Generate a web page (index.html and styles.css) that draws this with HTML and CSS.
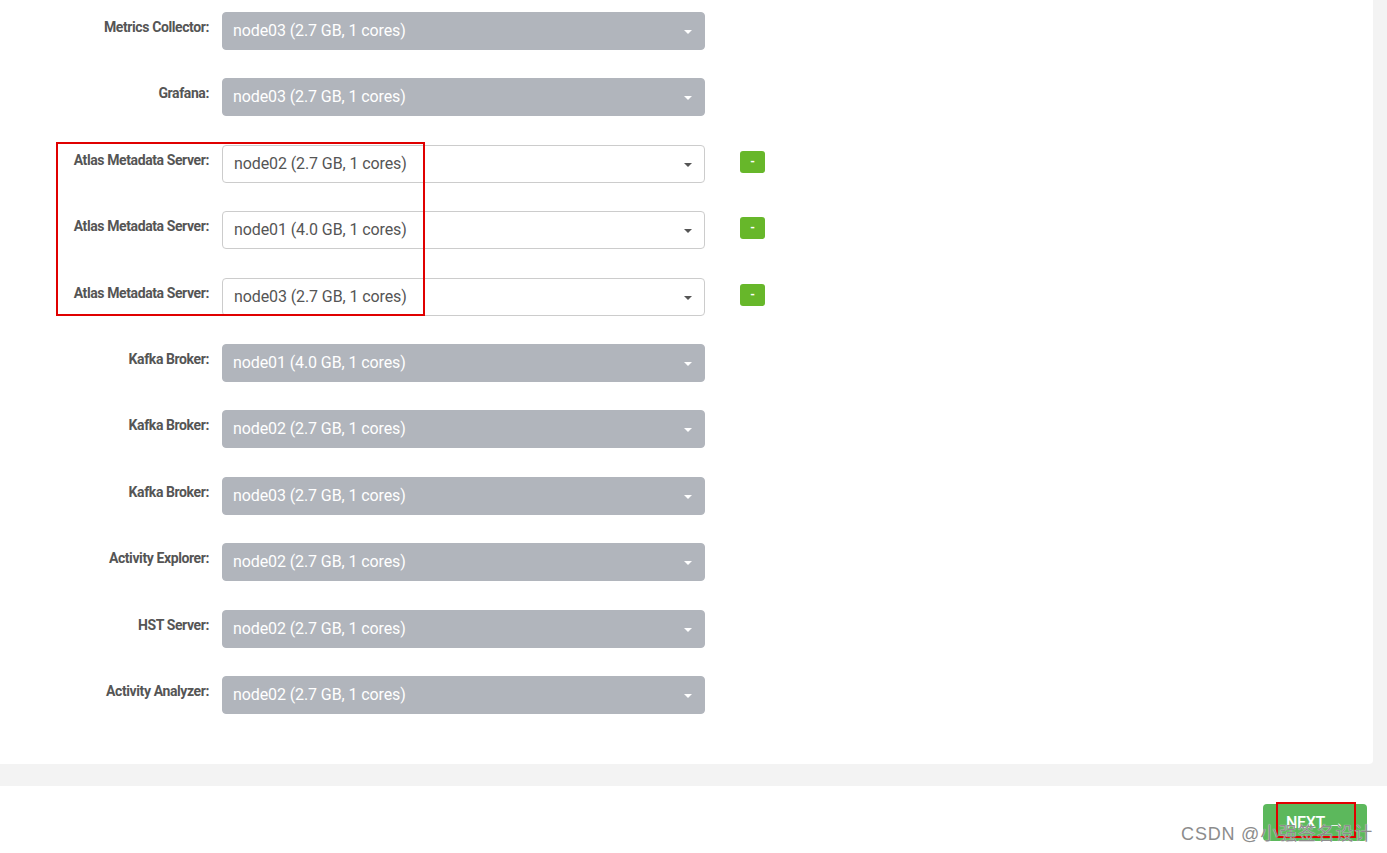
FILE: index.html
```html
<!DOCTYPE html>
<html lang="en">
<head>
  <meta charset="UTF-8" />
  <meta name="viewport" content="width=device-width, initial-scale=1" />
  <title>Assign Masters</title>
  <link rel="stylesheet" href="styles.css">
</head>
<body>

  <!-- MASTER ASSIGNMENT PANEL -->
  <div class="panel">
    <div class="row">
      <label>Metrics Collector:</label>
      <div class="select locked">node03 (2.7 GB, 1 cores)<span class="caret"></span></div>
    </div>
    <div class="row">
      <label>Grafana:</label>
      <div class="select locked">node03 (2.7 GB, 1 cores)<span class="caret"></span></div>
    </div>

    <div class="group">
      <div class="row">
        <label>Atlas Metadata Server:</label>
        <div class="select">node02 (2.7 GB, 1 cores)<span class="caret"></span></div>
        <button class="remove">-</button>
      </div>
      <div class="row">
        <label>Atlas Metadata Server:</label>
        <div class="select">node01 (4.0 GB, 1 cores)<span class="caret"></span></div>
        <button class="remove">-</button>
      </div>
      <div class="row">
        <label>Atlas Metadata Server:</label>
        <div class="select">node03 (2.7 GB, 1 cores)<span class="caret"></span></div>
        <button class="remove">-</button>
      </div>
      <div class="highlight"></div>
    </div>

    <div class="row">
      <label>Kafka Broker:</label>
      <div class="select locked">node01 (4.0 GB, 1 cores)<span class="caret"></span></div>
    </div>
    <div class="row">
      <label>Kafka Broker:</label>
      <div class="select locked">node02 (2.7 GB, 1 cores)<span class="caret"></span></div>
    </div>
    <div class="row">
      <label>Kafka Broker:</label>
      <div class="select locked">node03 (2.7 GB, 1 cores)<span class="caret"></span></div>
    </div>
    <div class="row">
      <label>Activity Explorer:</label>
      <div class="select locked">node02 (2.7 GB, 1 cores)<span class="caret"></span></div>
    </div>
    <div class="row">
      <label>HST Server:</label>
      <div class="select locked">node02 (2.7 GB, 1 cores)<span class="caret"></span></div>
    </div>
    <div class="row">
      <label>Activity Analyzer:</label>
      <div class="select locked">node02 (2.7 GB, 1 cores)<span class="caret"></span></div>
    </div>
  </div>

  <!-- WIZARD FOOTER -->
  <div class="footer">
    <button class="next">NEXT &rarr;<span class="next-mark"></span></button>
    <div class="watermark">CSDN @小强签名设计</div>
  </div>

</body>
</html>
```

FILE: styles.css
```css
/* Reset and base */
* {
  box-sizing: border-box;
  margin: 0;
  padding: 0;
}

body {
  font-family: Roboto, 'Liberation Sans', sans-serif;
  background-color: #f3f3f3;
  color: #555;
  overflow: hidden;
}

/* Panel */
.panel {
  background: #fff;
  width: 1373px;
  padding: 12px 0 22px;
  border-bottom-right-radius: 4px;
  margin-bottom: 22px;
}

.group {
  position: relative;
}

.row {
  display: flex;
  align-items: flex-start;
  height: 38px;
  margin-bottom: 28.4px;
}

.row label {
  width: 209px;
  padding-top: 6px;
  text-align: right;
  font-size: 14px;
  font-weight: 700;
  letter-spacing: -0.4px;
  line-height: 19px;
  color: #555;
  margin-right: 13px;
}

/* Host dropdowns */
.select {
  position: relative;
  width: 483px;
  height: 38px;
  padding: 0 11px;
  line-height: 36px;
  font-size: 16px;
  letter-spacing: -0.1px;
  color: #555;
  background: #fff;
  border: 1px solid #ccc;
  border-radius: 4px;
}

.select.locked {
  background: #b1b5bc;
  border-color: #b1b5bc;
  color: #fff;
  padding-left: 10px;
}

.caret {
  position: absolute;
  right: 12px;
  top: 17px;
  border-left: 4px solid transparent;
  border-right: 4px solid transparent;
  border-top: 4px solid #555;
}

.select.locked .caret {
  border-top-color: #fff;
}

/* Remove host button */
.remove {
  margin: 6px 0 0 35px;
  width: 25px;
  height: 22px;
  border: none;
  border-radius: 3px;
  background: #67b72a;
  color: #fff;
  font-family: inherit;
  font-size: 12px;
  font-weight: 700;
  line-height: 22px;
}

/* Annotation frame */
.highlight {
  position: absolute;
  left: 56px;
  top: -3px;
  width: 369px;
  height: 174px;
  border: 2px solid #e00000;
  pointer-events: none;
}

/* Footer */
.footer {
  position: relative;
  background: #fff;
  height: 67px;
  padding: 18px 20px 0 0;
  display: flex;
  justify-content: flex-end;
}

.next {
  position: relative;
  width: 104px;
  height: 37px;
  border: none;
  border-radius: 4px;
  background: #5cb85c;
  color: #fff;
  font-family: inherit;
  font-size: 16px;
  font-weight: 500;
  letter-spacing: -0.3px;
}

.next-mark {
  position: absolute;
  left: 13px;
  top: -2px;
  width: 80px;
  height: 36px;
  border: 2px solid #e00000;
}

.watermark {
  position: absolute;
  right: 14px;
  top: 33px;
  font-family: 'Liberation Sans', 'Noto Sans CJK SC', sans-serif;
  font-size: 18px;
  letter-spacing: 0.8px;
  color: #8c8c8c;
  text-shadow: 0 0 1px rgba(255, 255, 255, 0.9);
  white-space: nowrap;
  pointer-events: none;
}
```
